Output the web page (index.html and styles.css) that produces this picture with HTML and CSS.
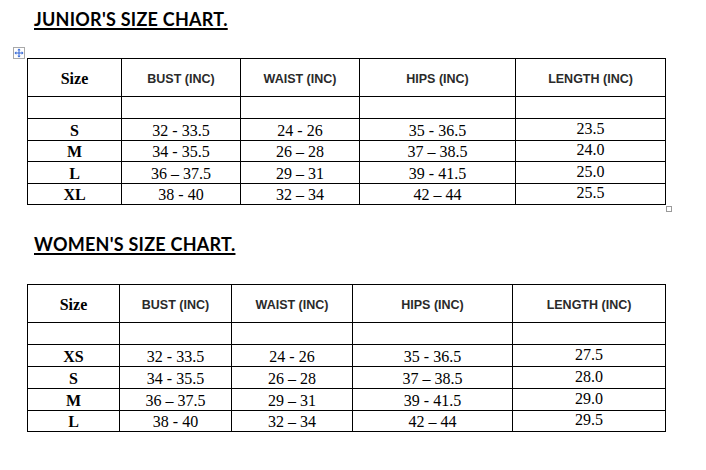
FILE: index.html
```html
<!DOCTYPE html>
<html>
<head>
<meta charset="utf-8">
<link rel="stylesheet" href="styles.css">
</head>
<body>
<div class="page">
  <section class="chart chart-junior">
    <h2 class="title">JUNIOR'S SIZE CHART.</h2>
    <div class="table-wrap">
      <span class="move-handle">
        <svg width="10" height="10" viewBox="0 0 10 10">
          <path d="M5 0.5 L3.3 2.3 H4.5 V4.5 H2.3 V3.3 L0.5 5 L2.3 6.7 V5.5 H4.5 V7.7 H3.3 L5 9.5 L6.7 7.7 H5.5 V5.5 H7.7 V6.7 L9.5 5 L7.7 3.3 V4.5 H5.5 V2.3 H6.7 Z" fill="#2f63d4"/>
        </svg>
      </span>
      <table class="size-table">
        <colgroup>
          <col class="jc1"><col class="jc2"><col class="jc3"><col class="jc4"><col class="jc5">
        </colgroup>
        <tr class="head-row">
          <th class="size-head">Size</th>
          <th>BUST (INC)</th>
          <th>WAIST (INC)</th>
          <th>HIPS (INC)</th>
          <th>LENGTH (INC)</th>
        </tr>
        <tr class="blank-row"><td></td><td></td><td></td><td></td><td></td></tr>
        <tr class="row-22"><td class="size">S</td><td>32 - 33.5</td><td>24 - 26</td><td>35 - 36.5</td><td class="len">23.5</td></tr>
        <tr class="row-21"><td class="size">M</td><td>34 - 35.5</td><td>26 – 28</td><td>37 – 38.5</td><td class="len">24.0</td></tr>
        <tr class="row-22"><td class="size">L</td><td>36 – 37.5</td><td>29 – 31</td><td>39 - 41.5</td><td class="len">25.0</td></tr>
        <tr class="row-21"><td class="size">XL</td><td>38 - 40</td><td>32 – 34</td><td>42 – 44</td><td class="len">25.5</td></tr>
      </table>
      <span class="resize-handle"></span>
    </div>
  </section>

  <section class="chart chart-women">
    <h2 class="title">WOMEN'S SIZE CHART.</h2>
    <div class="table-wrap">
      <table class="size-table">
        <colgroup>
          <col class="wc1"><col class="wc2"><col class="wc3"><col class="wc4"><col class="wc5">
        </colgroup>
        <tr class="head-row">
          <th class="size-head">Size</th>
          <th>BUST (INC)</th>
          <th>WAIST (INC)</th>
          <th>HIPS (INC)</th>
          <th>LENGTH (INC)</th>
        </tr>
        <tr class="blank-row"><td></td><td></td><td></td><td></td><td></td></tr>
        <tr class="row-22"><td class="size">XS</td><td>32 - 33.5</td><td>24 - 26</td><td>35 - 36.5</td><td class="len">27.5</td></tr>
        <tr class="row-22"><td class="size">S</td><td>34 - 35.5</td><td>26 – 28</td><td>37 – 38.5</td><td class="len">28.0</td></tr>
        <tr class="row-22"><td class="size">M</td><td>36 – 37.5</td><td>29 – 31</td><td>39 - 41.5</td><td class="len">29.0</td></tr>
        <tr class="row-21"><td class="size">L</td><td>38 - 40</td><td>32 – 34</td><td>42 – 44</td><td class="len">29.5</td></tr>
      </table>
    </div>
  </section>
</div>
</body>
</html>
```

FILE: styles.css
```css
html, body {
  margin: 0;
  padding: 0;
  background: #ffffff;
}

.page {
  padding-top: 8px;
  padding-left: 27px;
}

.chart {
  display: flex;
  flex-direction: column;
  align-items: flex-start;
}

.title {
  margin: 0 0 0 7px;
  font-family: Lato, "Open Sans", sans-serif;
  font-weight: 700;
  font-size: 18px;
  line-height: 22px;
  letter-spacing: 0.25px;
  color: #000;
  text-decoration: underline;
  text-decoration-thickness: 2px;
  text-underline-offset: 2px;
}

.chart-junior .title {
  margin-bottom: 28px;
}

.chart-women {
  margin-top: 28px;
}

.chart-women .title {
  margin-bottom: 29px;
}

.table-wrap {
  position: relative;
}

.move-handle {
  position: absolute;
  left: -14px;
  top: -11px;
  width: 10px;
  height: 10px;
  border: 1px solid #a9a9a9;
  background: #fff;
  display: flex;
  align-items: center;
  justify-content: center;
}

.resize-handle {
  position: absolute;
  right: -6px;
  bottom: -7px;
  width: 4px;
  height: 4px;
  border: 1px solid #9a9a9a;
  background: #fff;
}

.size-table {
  border-collapse: collapse;
  table-layout: fixed;
  width: 638px;
}

.jc1 { width: 94px; }
.jc2 { width: 119px; }
.jc3 { width: 119px; }
.jc4 { width: 156px; }
.jc5 { width: 150px; }

.wc1 { width: 92px; }
.wc2 { width: 112px; }
.wc3 { width: 121px; }
.wc4 { width: 160px; }
.wc5 { width: 153px; }

.size-table th,
.size-table td {
  border: 1px solid #000;
  padding: 0;
  text-align: center;
  vertical-align: middle;
}

.size-table th {
  font-family: "Liberation Sans", Arial, sans-serif;
  font-weight: 700;
  font-size: 12.5px;
  color: #2a2a2a;
  padding-top: 2px;
}

.size-table th.size-head {
  font-family: "Liberation Serif", "Times New Roman", serif;
  font-size: 16px;
  color: #000;
}

.size-table td {
  font-family: "Liberation Serif", "Times New Roman", serif;
  font-size: 16px;
  line-height: 18px;
  color: #000;
  padding-top: 2px;
}

.size-table td.size {
  font-weight: 700;
}

.size-table td.len {
  padding-top: 0;
  padding-bottom: 2px;
}

.head-row { height: 38px; }
.blank-row { height: 22px; }
.row-22 { height: 22px; }
.row-21 { height: 21px; }
```
